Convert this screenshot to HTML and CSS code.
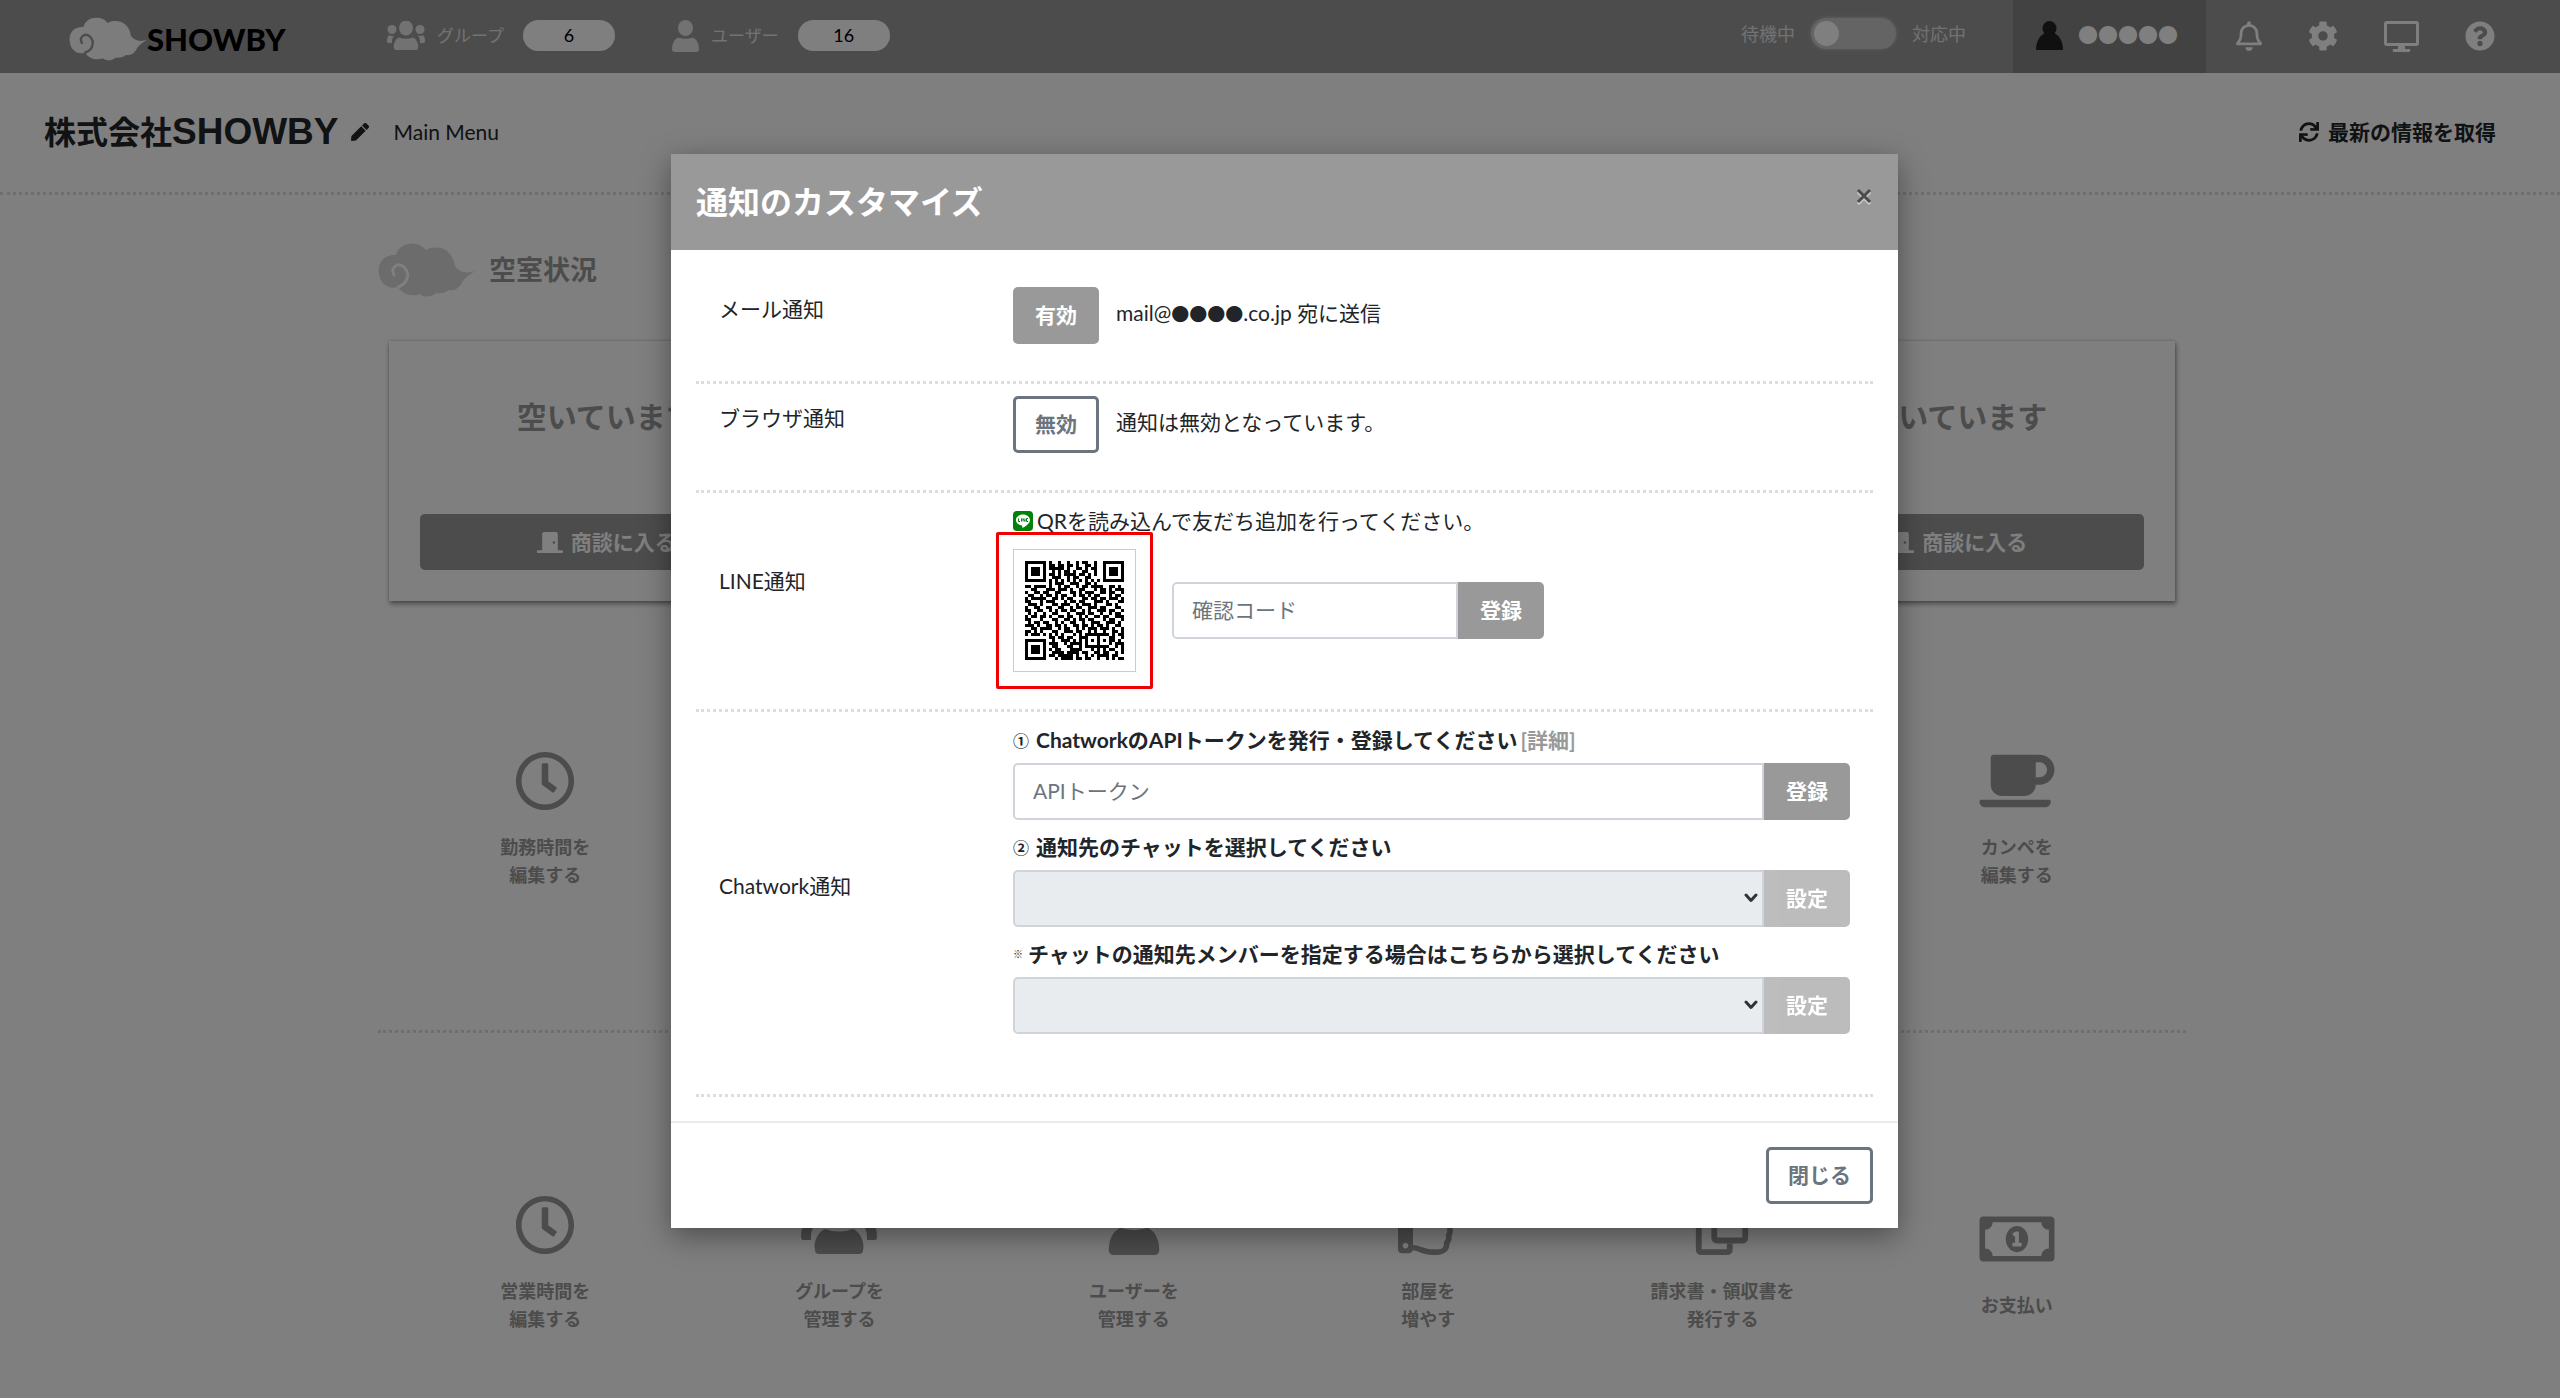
FILE: index.html
```html
<!DOCTYPE html>
<html lang="ja">
<head>
<meta charset="utf-8">
<meta name="viewport" content="width=device-width, initial-scale=1">
<title>SHOWBY</title>
<link rel="stylesheet" href="styles.css">
</head>
<body>
<svg width="0" height="0" class="sprite" aria-hidden="true">
  <symbol id="cloud" viewBox="0 0 97 54">
    <path fill="currentColor" stroke="none" d="M1 31C-1 20 6 11 18 12C20 3 30-1 38 1C43 2 46 5 48 7C55 3 66 4 71 10C75 14 76 18 77 23C81 29 88 31 97 28C92 31 87 35 85 38C82 44 78 48 71 47C67 50 62 51 58 50C55 54 46 55 42 51C35 54 25 52 20 44C10 47 2 40 1 31Z"/>
    <path fill="none" stroke-width="3" stroke-linecap="round" d="M16 32C12 24 20 19 26 24C33 31 29 41 20 44"/>
  </symbol>
  <symbol id="users" viewBox="0 0 38 29">
    <g fill="currentColor"><ellipse cx="19" cy="7" rx="7" ry="7.5"/><ellipse cx="5" cy="8.500" rx="4.500" ry="4.500"/><ellipse cx="33" cy="8.500" rx="4.500" ry="4.500"/><path d="M12 16.500Q19 19 26 16.500C30 18 32 24 31 27Q31 29 29 29H9Q7 29 7 27C6 24 8 18 12 16.500Z"/><path d="M2 14Q5 16 8 14C5 16 5 19 5 22H1Q0 22 0 20Q0 16 2 14ZM36 14Q33 16 30 14C33 16 33 19 33 22H37Q38 22 38 20Q38 16 36 14Z"/></g>
  </symbol>
  <symbol id="user" viewBox="0 0 27 32">
    <g fill="currentColor"><ellipse cx="13.500" cy="8" rx="7.500" ry="8"/><path d="M6 17.500Q13.500 20 21 17.500Q27 21 27 29Q27 32 24 32H3Q0 32 0 29Q0 21 6 17.500Z"/></g>
  </symbol>
  <symbol id="pawn" viewBox="0 0 27 29">
    <g fill="currentColor"><ellipse cx="13.500" cy="7.500" rx="7" ry="7.500"/><path d="M9 12H18C24 15 27 21 27 29H0C0 21 3 15 9 12Z"/></g>
  </symbol>
  <symbol id="bell" viewBox="0 0 448 512"><path fill="currentColor" d="M439.39 362.29c-19.32-20.76-55.47-51.99-55.47-154.29 0-77.7-54.48-139.9-127.94-155.16V32c0-17.67-14.32-32-31.98-32s-31.98 14.33-31.98 32v20.84C118.56 68.1 64.08 130.3 64.08 208c0 102.3-36.15 133.53-55.47 154.29-6 6.45-8.66 14.16-8.61 21.71.11 16.4 12.98 32 32.1 32h383.8c19.12 0 32-15.6 32.1-32 .05-7.55-2.61-15.27-8.61-21.71zM67.53 368c21.22-27.97 44.42-74.33 44.53-159.42 0-.2-.06-.38-.06-.58 0-61.86 50.14-112 112-112s112 50.14 112 112c0 .2-.06.38-.06.58.11 85.1 23.31 131.46 44.53 159.42H67.53zM224 512c35.32 0 63.97-28.65 63.97-64H160.03c0 35.35 28.65 64 63.97 64z"/></symbol>
  <symbol id="cog" viewBox="0 0 512 512"><path fill="currentColor" d="M487.4 315.7l-42.6-24.6c4.3-23.2 4.3-47 0-70.2l42.6-24.6c4.9-2.8 7.1-8.6 5.5-14-11.1-35.6-30-67.8-54.7-94.6-3.8-4.1-10-5.1-14.8-2.3L380.8 110c-17.9-15.4-38.5-27.3-60.8-35.1V25.8c0-5.6-3.9-10.5-9.4-11.7-36.7-8.2-74.3-7.8-109.2 0-5.5 1.2-9.4 6.1-9.4 11.7V75c-22.2 7.9-42.8 19.8-60.8 35.1L88.7 85.5c-4.9-2.8-11-1.9-14.8 2.3-24.7 26.7-43.6 58.9-54.7 94.6-1.7 5.4.6 11.2 5.500 14L67.3 221c-4.300 23.200-4.300 47 0 70.200l-42.600 24.600c-4.900 2.800-7.100 8.600-5.500 14 11.100 35.600 30 67.800 54.700 94.600 3.800 4.100 10 5.100 14.800 2.300l42.600-24.600c17.900 15.400 38.500 27.300 60.800 35.100v49.200c0 5.600 3.900 10.500 9.400 11.700 36.700 8.200 74.300 7.800 109.200 0 5.500-1.200 9.400-6.100 9.400-11.700v-49.200c22.200-7.900 42.800-19.800 60.800-35.100l42.600 24.600c4.900 2.800 11 1.900 14.800-2.300 24.700-26.700 43.600-58.900 54.700-94.600 1.500-5.500-.7-11.300-5.600-14.100zM256 336c-44.100 0-80-35.900-80-80s35.900-80 80-80 80 35.900 80 80-35.900 80-80 80z"/></symbol>
  <symbol id="monitor" viewBox="0 0 35 32"><path fill="none" stroke="currentColor" stroke-width="3" d="M3 2.500H32Q33.500 2.500 33.500 4V23Q33.500 24.500 32 24.500H3Q1.500 24.500 1.500 23V4Q1.500 2.500 3 2.500Z"/><path fill="currentColor" d="M14 25H21V29H26Q27 32 25 32H10Q8 32 9 29H14Z"/></symbol>
  <symbol id="help" viewBox="0 0 512 512"><path fill="currentColor" d="M504 256c0 136.997-111.043 248-248 248S8 392.997 8 256C8 119.083 119.043 8 256 8s248 111.083 248 248zM262.655 90c-54.497 0-89.255 22.957-116.549 63.758-3.536 5.286-2.353 12.415 2.715 16.258l34.699 26.310c5.205 3.947 12.621 3.008 16.665-2.122 17.864-22.658 30.113-35.797 57.303-35.797 20.429 0 45.698 13.148 45.698 32.958 0 14.976-12.363 22.667-32.534 33.976C247.128 238.528 216 254.941 216 296v4c0 6.627 5.373 12 12 12h56c6.627 0 12-5.373 12-12v-1.333c0-28.462 83.186-29.647 83.186-106.667 0-58.002-60.165-102-116.531-102zM256 338c-25.365 0-46 20.635-46 46 0 25.364 20.635 46 46 46s46-20.636 46-46c0-25.365-20.635-46-46-46z"/></symbol>
  <symbol id="pen" viewBox="0 0 512 512"><path fill="currentColor" d="M290.74 93.24l128.02 128.02-277.99 277.99-114.14 12.6C11.35 513.54-1.56 500.62.14 485.34l12.7-114.22 277.9-277.88zm207.2-19.06l-60.11-60.11c-18.75-18.75-49.16-18.75-67.91 0l-56.55 56.55 128.02 128.02 56.55-56.55c18.75-18.76 18.75-49.16 0-67.91z"/></symbol>
  <symbol id="sync" viewBox="0 0 512 512"><path fill="currentColor" d="M440.65 12.57l4 82.77A247.16 247.16 0 0 0 255.83 8C134.73 8 33.91 94.92 12.29 209.82A12 12 0 0 0 24.09 224h49.05a12 12 0 0 0 11.67-9.26 175.91 175.91 0 0 1 317-56.94l-101.46-4.86a12 12 0 0 0-12.57 12v47.41a12 12 0 0 0 12 12H500a12 12 0 0 0 12-12V12a12 12 0 0 0-12-12h-47.37a12 12 0 0 0-11.98 12.57zM255.83 432a175.61 175.61 0 0 1-146-77.8l101.8 4.87a12 12 0 0 0 12.57-12v-47.4a12 12 0 0 0-12-12H12a12 12 0 0 0-12 12V500a12 12 0 0 0 12 12h47.35a12 12 0 0 0 12-12.6l-4.15-82.57A247.17 247.17 0 0 0 255.83 504c121.11 0 221.93-86.92 243.55-201.82a12 12 0 0 0-11.8-14.18h-49.05a12 12 0 0 0-11.67 9.26A175.86 175.86 0 0 1 255.83 432z"/></symbol>
  <symbol id="door" viewBox="0 0 640 512"><path fill="currentColor" d="M624 448H512V50.8C512 22.78 490.47 0 464 0H175.99c-26.47 0-48 22.78-48 50.8V448H16c-8.84 0-16 7.16-16 16v32c0 8.840 7.160 16 16 16h608c8.840 0 16-7.160 16-16v-32c0-8.840-7.160-16-16-16zM415.990 288c-17.670 0-32-14.330-32-32s14.330-32 32-32 32 14.330 32 32c.010 17.670-14.320 32-32 32z"/></symbol>
  <symbol id="clock" viewBox="0 0 512 512"><path fill="currentColor" d="M256 8C119 8 8 119 8 256s111 248 248 248 248-111 248-248S393 8 256 8zm0 448c-110.5 0-200-89.5-200-200S145.5 56 256 56s200 89.5 200 200-89.5 200-200 200zm61.8-104.4l-84.9-61.7c-3.100-2.300-4.900-5.900-4.900-9.700V116c0-6.600 5.400-12 12-12h32c6.600 0 12 5.400 12 12v141.700l66.800 48.600c5.400 3.900 6.500 11.400 2.600 16.800L334.600 349c-3.900 5.300-11.400 6.500-16.800 2.600z"/></symbol>
  <symbol id="coffee" viewBox="0 0 640 512"><path fill="currentColor" d="M192 384h192c53 0 96-43 96-96h32c70.600 0 128-57.400 128-128S582.600 32 512 32H120c-13.300 0-24 10.700-24 24v232c0 53 43 96 96 96zM512 96c35.300 0 64 28.700 64 64s-28.700 64-64 64h-32V96h32zm47.700 384H48.300c-47.600 0-61-64-36-64h583.300c25 0 11.800 64-35.900 64z"/></symbol>
  <symbol id="thumb" viewBox="0 0 512 512"><path fill="currentColor" d="M466.27 286.69C475.04 271.84 480 256 480 236.85c0-44.015-37.218-85.58-85.82-85.58H357.7c4.92-12.81 8.85-28.13 8.85-46.54C366.55 31.936 328.86 0 271.28 0c-61.607 0-58.093 94.933-71.76 108.6-22.747 22.747-49.615 66.447-68.76 83.4H32c-17.673 0-32 14.327-32 32v240c0 17.673 14.327 32 32 32h64c14.893 0 27.408-10.174 30.978-23.95 44.509 1.001 75.06 39.94 177.802 39.94 7.22 0 15.22.01 22.22.01 77.117 0 111.986-39.423 112.94-95.33 13.319-18.425 20.299-43.122 17.34-66.99 9.854-18.452 13.664-40.343 8.99-62.99zm-61.75 53.83c12.56 21.13 1.26 49.41-13.94 57.57 7.7 48.78-17.608 65.9-53.12 65.9h-37.82c-71.639 0-118.029-37.82-171.64-37.82V240h10.92c28.36 0 67.98-70.89 94.54-97.46 28.36-28.36 18.91-75.63 37.82-94.54 47.27 0 47.27 32.98 47.27 56.73 0 39.17-28.36 56.72-28.36 94.54h103.99c21.11 0 37.73 18.91 37.82 37.82.09 18.9-12.82 37.81-22.27 37.81 13.489 14.555 16.371 45.236-5.21 65.62zM88 432c0 13.255-10.745 24-24 24s-24-10.745-24-24 10.745-24 24-24 24 10.745 24 24z"/></symbol>
  <symbol id="copy" viewBox="0 0 54 62"><g fill="none" stroke="currentColor" stroke-width="6"><path d="M19 3H40L51 14V44Q51 47 48 47H22Q19 47 19 44Z"/><path d="M16 15H6Q3 15 3 18V56Q3 59 6 59H32Q35 59 35 56V50"/></g></symbol>
  <symbol id="money" viewBox="0 0 640 512"><path fill="currentColor" d="M320 144c-53.02 0-96 50.14-96 112 0 61.85 42.98 112 96 112 53 0 96-50.13 96-112 0-61.86-42.98-112-96-112zm40 168c0 4.42-3.58 8-8 8h-64c-4.42 0-8-3.58-8-8v-16c0-4.42 3.58-8 8-8h16v-55.44l-.47.31a7.992 7.992 0 0 1-11.09-2.22l-8.88-13.31a7.992 7.992 0 0 1 2.22-11.09l15.33-10.22a23.99 23.99 0 0 1 13.31-4.03H328c4.42 0 8 3.58 8 8V288h16c4.42 0 8 3.58 8 8v16zM608 64H32C14.33 64 0 78.33 0 96v320c0 17.67 14.33 32 32 32h576c17.67 0 32-14.33 32-32V96c0-17.67-14.33-32-32-32zm-16 272c-35.35 0-64 28.65-64 64H112c0-35.35-28.65-64-64-64V176c35.35 0 64-28.65 64-64h416c0 35.35 28.65 64 64 64v160z"/></symbol>
  <symbol id="chevron" viewBox="0 0 14 10"><path fill="none" stroke="currentColor" stroke-width="3" stroke-linecap="round" stroke-linejoin="round" d="M2 2L7 7.500L12 2"/></symbol>
</svg>

<header class="topbar">
  <a class="brand" href="#"><svg class="brand-cloud"><use href="#cloud"/></svg><span>SHOWBY</span></a>
  <div class="stat">
    <svg class="i-users"><use href="#users"/></svg><span class="stat-name">グループ</span><span class="pill">6</span>
  </div>
  <div class="stat">
    <svg class="i-user"><use href="#user"/></svg><span class="stat-name">ユーザー</span><span class="pill">16</span>
  </div>
  <div class="status">
    <label for="status">待機中</label>
    <input class="switch" type="checkbox" id="status">
    <label for="status">対応中</label>
  </div>
  <button class="account" type="button"><svg class="i-pawn"><use href="#pawn"/></svg><span class="mask">●●●●●</span></button>
  <nav class="tools">
    <button type="button" aria-label="お知らせ"><svg class="i-bell"><use href="#bell"/></svg></button>
    <button type="button" aria-label="設定"><svg class="i-tool"><use href="#cog"/></svg></button>
    <button type="button" aria-label="画面"><svg class="i-monitor"><use href="#monitor"/></svg></button>
    <button type="button" aria-label="ヘルプ"><svg class="i-tool"><use href="#help"/></svg></button>
  </nav>
</header>

<div class="pagehead">
  <h1>株式会社<span>SHOWBY</span></h1>
  <svg class="i-pen"><use href="#pen"/></svg>
  <span class="crumb">Main Menu</span>
  <button class="refresh" type="button"><svg class="i-sync"><use href="#sync"/></svg>最新の情報を取得</button>
</div>

<main class="main">
  <h2 class="section-title"><svg class="title-cloud"><use href="#cloud"/></svg>空室状況</h2>
  <div class="rooms">
    <article class="room">
      <h3>空いています</h3>
      <button type="button"><svg class="i-door"><use href="#door"/></svg>商談に入る</button>
    </article>
    <article class="room room-last">
      <h3>空いています</h3>
      <button type="button"><svg class="i-door"><use href="#door"/></svg>商談に入る</button>
    </article>
  </div>

  <div class="tiles">
    <a class="tile" href="#"><svg class="t-icon"><use href="#clock"/></svg>勤務時間を<br>編集する</a>
    <a class="tile tile-last" href="#"><svg class="t-icon t-wide"><use href="#coffee"/></svg>カンペを<br>編集する</a>
  </div>
  <hr class="rule">
  <div class="tiles">
    <a class="tile" href="#"><svg class="t-icon"><use href="#clock"/></svg>営業時間を<br>編集する</a>
    <a class="tile" href="#"><svg class="t-icon t-wide"><use href="#users"/></svg>グループを<br>管理する</a>
    <a class="tile" href="#"><svg class="t-icon"><use href="#user"/></svg>ユーザーを<br>管理する</a>
    <a class="tile" href="#"><svg class="t-icon"><use href="#thumb"/></svg>部屋を<br>増やす</a>
    <a class="tile" href="#"><svg class="t-icon"><use href="#copy"/></svg>請求書・領収書を<br>発行する</a>
    <a class="tile" href="#"><svg class="t-icon t-wide"><use href="#money"/></svg>お支払い</a>
  </div>
</main>

<div class="backdrop">
  <section class="modal" role="dialog" aria-modal="true" aria-labelledby="modal-title">
    <header class="modal-head">
      <h2 id="modal-title">通知のカスタマイズ</h2>
      <button class="close" type="button" aria-label="閉じる"><svg viewBox="0 0 16 16"><path d="M2 2L14 14M14 2L2 14"/></svg></button>
    </header>
    <div class="modal-body">
      <div class="row">
        <div class="name">メール通知</div>
        <div class="field inline"><button class="btn" type="button">有効</button><p>mail@<span class="mask mask-small">●●●●</span>.co.jp 宛に送信</p></div>
      </div>
      <div class="row">
        <div class="name">ブラウザ通知</div>
        <div class="field inline"><button class="btn btn-outline" type="button">無効</button><p>通知は無効となっています。</p></div>
      </div>
      <div class="row row-line">
        <label class="name" for="line-code">LINE通知</label>
        <div class="field">
          <p class="lead"><svg class="i-line" viewBox="0 0 20 20"><rect width="20" height="20" rx="4" fill="#00820a"/><path fill="#fff" d="M10 3.500C5.800 3.500 3 6 3 9C3 12 5.500 14 9 14.500L9.500 17C13 15 17 12.500 17 9C17 6 14.200 3.500 10 3.500Z"/><path stroke="#00820a" d="M5.500 7.500V10.500H7M8.500 7.500V10.500M10 10.500V7.500L12 10.500V7.500M15 7.500H13.500V10.500H15"/></svg>QRを読み込んで友だち追加を行ってください。</p>
          <div class="line-form">
            <div class="qr"><svg id="qr" viewBox="0 0 33 33" shape-rendering="crispEdges" role="img" aria-label="QR"></svg></div>
            <div class="group"><input type="text" id="line-code" placeholder="確認コード"><button class="btn" type="button">登録</button></div>
          </div>
        </div>
      </div>
      <div class="row row-chat">
        <div class="name">Chatwork通知</div>
        <div class="field">
          <div class="caption"><span class="num">①</span><label for="token">ChatworkのAPIトークンを発行・登録してください</label><a href="#">[詳細]</a></div>
          <div class="group"><input type="text" id="token" placeholder="APIトークン"><button class="btn" type="button">登録</button></div>
          <div class="caption"><span class="num">②</span><label for="chat">通知先のチャットを選択してください</label></div>
          <div class="group"><div class="select"><select id="chat" disabled></select><svg><use href="#chevron"/></svg></div><button class="btn" type="button" disabled>設定</button></div>
          <div class="caption"><span class="num note">※</span><label for="member">チャットの通知先メンバーを指定する場合はこちらから選択してください</label></div>
          <div class="group"><div class="select"><select id="member" disabled></select><svg><use href="#chevron"/></svg></div><button class="btn" type="button" disabled>設定</button></div>
        </div>
      </div>
    </div>
    <footer class="modal-foot"><button class="btn btn-outline" type="button">閉じる</button></footer>
  </section>
</div>
<script src="qr.js"></script>
</body>
</html>
```
FILE: styles.css
```css
* { box-sizing: border-box; }

body {
  margin: 0;
  min-height: 100vh;
  background: #fff;
  color: #212529;
  font: 21px/32px Lato, "Noto Sans CJK JP", sans-serif;
}

h1, h2, h3, p { margin: 0; }
button, input, select { font: inherit; color: inherit; }
button { padding: 0; border: 0; background: none; cursor: pointer; }
a { color: inherit; text-decoration: none; }
svg { display: block; flex: none; }
.sprite { position: absolute; }
.mask { font-family: "Noto Sans CJK JP", sans-serif; font-size: 20px; line-height: 30px; }
.mask-small { font-size: 18px; }

/* top bar */
.topbar {
  display: flex;
  align-items: center;
  height: 73px;
  background: #999;
  color: #fff;
  font-size: 18px;
}
.brand {
  display: flex;
  align-items: center;
  width: 387px;
  padding: 4px 0 0 69px;
  color: #000;
  font-size: 31px;
  font-weight: 900;
}
.brand-cloud { width: 78px; height: 44px; color: #f8f8f8; stroke: #999; }
.stat { display: flex; align-items: center; gap: 12px; margin-right: 57px; padding-bottom: 2px; font-size: 17px; color: #e4e4e4; }
.pill {
  width: 92px;
  height: 31px;
  margin-left: 7px;
  border-radius: 16px;
  background: #fff;
  color: #000;
  font-size: 18px;
  line-height: 31px;
  text-align: center;
}
.i-users { width: 38px; height: 29px; }
.i-user { width: 27px; height: 32px; }
.status { display: flex; align-items: center; gap: 16px; margin-left: auto; padding-bottom: 6px; color: #e4e4e4; }
.switch {
  appearance: none;
  display: flex;
  align-items: center;
  width: 85px;
  height: 31px;
  margin: 0;
  padding: 3px;
  border-radius: 16px;
  background: #c8c8c8;
  box-shadow: 0 0 3px 1px #ddd6;
}
.switch::before { content: ""; width: 25px; height: 25px; border-radius: 50%; background: #fff; }
.account {
  display: flex;
  align-items: center;
  gap: 15px;
  align-self: stretch;
  margin-left: 47px;
  padding: 0 28px 3px 23px;
  background: #848484;
  color: #fff;
}
.i-pawn { width: 27px; height: 29px; color: #212121; }
.tools { display: flex; align-items: center; gap: 46px; padding: 0 65px 2px 30px; }
.tools button { color: inherit; }
.i-bell { width: 26px; height: 30px; }
.i-tool { width: 30px; height: 30px; }
.i-monitor { width: 35px; height: 32px; }

/* page heading */
.pagehead {
  display: flex;
  align-items: center;
  height: 122px;
  padding: 0 64px 2px 44px;
  border-bottom: 3px dotted #ddd;
}
.pagehead h1 { font-size: 32px; line-height: 40px; font-weight: 700; }
.pagehead h1 span { font-family: "Liberation Sans", sans-serif; font-size: 37px; }
.i-pen { width: 18px; height: 18px; margin: 0 25px 0 12px; }
.refresh { display: flex; align-items: center; gap: 8px; margin-left: auto; font-weight: 700; }
.i-sync { width: 22px; height: 20px; }

/* dashboard */
.main { max-width: 1812px; margin: 0 auto; padding: 48px 0 40px 4px; color: #999; }
.section-title { display: flex; align-items: center; gap: 14px; font-size: 27px; line-height: 54px; }
.title-cloud { width: 97px; height: 54px; color: #d8d8d8; stroke: #fff; }
.rooms {
  display: grid;
  grid-template-columns: repeat(4, 1fr);
  gap: 16px;
  margin: 44px 0 150px;
  padding: 0 11px;
}
.room { padding: 52px 31px 31px; text-align: center; box-shadow: 1px 3px 5px #0006, 0 0 3px #0003; }
.room-last { grid-column: 4; }
.room h3 { margin-bottom: 75px; font-size: 30px; line-height: 46px; }
.room button {
  display: flex;
  align-items: center;
  justify-content: center;
  gap: 8px;
  width: 100%;
  height: 56px;
  border-radius: 5px;
  background: #999;
  color: #fff;
  font-weight: 700;
}
.i-door { width: 26px; height: 21px; }
.tiles { display: grid; grid-template-columns: repeat(6, 1fr); align-items: center; padding: 0 22px 0 20px; }
.tile { font-size: 18px; line-height: 28px; font-weight: 700; text-align: center; }
.tile-last { grid-column: 6; }
.t-icon { width: 60px; height: 60px; margin: 0 auto 22px; }
.t-wide { width: 76px; }
.rule { margin: 141px 0 162px; border: 0; border-top: 3px dotted #ddd; }

/* modal */
.backdrop {
  position: absolute;
  inset: 0;
  padding: 154px 0 60px 9px;
  background: #00000080;
}
.modal {
  max-width: 1227px;
  margin: 0 auto;
  background: #fff;
  box-shadow: 0 8px 28px #0006;
}
.modal-head {
  display: flex;
  justify-content: space-between;
  align-items: center;
  height: 96px;
  padding: 0 25px;
  background: #999;
  color: #fff;
}
.modal-head h2 { font-size: 32px; line-height: 48px; }
.close { padding: 0 1px 12px; }
.close svg { width: 16px; height: 16px; fill: none; stroke: #4c4c4c; stroke-width: 3; filter: drop-shadow(0 2px 0 #fff8); }
.modal-body { padding: 25px 25px 24px; }
.row { display: flex; padding: 12px 23px 37px; border-bottom: 3px dotted #ddd; }
.name { width: 294px; padding-top: 6px; }
.row-line .name { padding-top: 60px; }
.row-chat .name { padding-top: 146px; }
.row-chat { padding-bottom: 60px; }
.field { flex: 1; }
.inline { display: flex; align-items: center; gap: 17px; }
.inline p { padding-bottom: 6px; }
.btn {
  height: 57px;
  padding: 0 22px 2px;
  border-radius: 5px;
  background: #999;
  color: #fff;
  font-weight: 700;
}
.btn:disabled { opacity: .65; }
.btn-outline { padding: 0 19px 2px; border: 3px solid #6c757d; background: #fff; color: #6c757d; }
.lead { display: flex; align-items: center; gap: 4px; }
.i-line { width: 20px; height: 20px; fill: none; }
.line-form { display: flex; align-items: center; gap: 36px; margin-top: 12px; }
.qr { position: relative; width: 123px; height: 123px; padding: 11px; border: 1px solid #ccc; }
.qr svg { width: 99px; height: 99px; }
.qr::after { content: ""; position: absolute; inset: -18px; border: 3px solid #f00000; border-radius: 2px; }
.group { display: flex; }
.group input, .group select {
  width: 100%;
  min-width: 0;
  height: 57px;
  padding: 0 18px 2px;
  border: 2px solid #ced4da;
  border-radius: 5px 0 0 5px;
  background: #fff;
}
.line-form input { width: 286px; }
.group input::placeholder { color: #6c757d; opacity: 1; }
.group .btn { flex: none; border-radius: 0 5px 5px 0; }
.select { position: relative; flex: 1; }
.group select { display: block; appearance: none; background: #e9ecef; opacity: 1; }
.select svg { position: absolute; right: 6px; top: 23px; width: 14px; height: 10px; color: #333; }
.caption { display: flex; margin-bottom: 7px; line-height: 32px; font-weight: 700; }
.group + .caption { margin-top: 11px; }
.caption a { margin-left: 3px; color: #999; }
.num { width: 23px; font-size: 16px; font-family: "Noto Sans CJK JP", sans-serif; }
.note { width: 15px; font-size: 10px; font-weight: 400; }
.modal-foot { padding: 24px 25px; border-top: 2px solid #e9ecef; text-align: right; }
.modal-foot .btn { display: inline-block; vertical-align: top; }
```
FILE: qr.js
```js
const modules = [
  "#######.#..#..#..#.##..#.#######.",
  "#.....#.##.##.##.#..##.#.#.....#.",
  "#.###.#.#####.#..##.#.##.#.###.#.",
  "#.###.#..#.#.##.#..##..#.#.###.#.",
  "#.###.#.##.#.####.##.#.#.#.###.#.",
  "#.....#..###..#.##..##...#.....#.",
  "#######.#.#.#.#.#.#.#.#.#.#######",
  "........#.###..###..##.#.........",
  "##.####.#..#.##..#.##.####..##.#.",
  "..##...###.###.#..##...#.##.#.###",
  "#..##.##..##...##.#.###..##.##..#",
  ".##..#.##.#.##..#.##.#.##...#.##.",
  "#.#####..##.#.##...##.##.##.###.#",
  "##...#.###...#.##.##...###.#...##",
  ".###.#...##.###..#.###.#...##.#..",
  "#..##..##..##..#.##..###.##...##.",
  "##..##..#.#.##.##..#.#..###.##..#",
  ".#.#..#..##...#..###.##..#..#.##.",
  "#.##.##.#..##.##..#.#..##.##..###",
  "##...#...##..##.#.##.##...#.##..#",
  ".#.##.##..#.#..##..#..###..###.#.",
  "###.#..##.##.#..##.##.#.##.#..##.",
  "..##.####..#.##..#.#.###.###.#..#",
  "##.#.#...##..###.##..#.#..#..##.#",
  "#.###.#.#.#.#...#.#.########.#.##",
  "........##.##.##..###...#...##..#",
  "#######..#..###.#.#.#.#.#.#.##.#.",
  "#.....#.###..#.####.#...#...#.###",
  "#.###.#..##...##..#.########..#.#",
  "#.###.#.#.##...####...#.#.#.##..#",
  "#.###.#..####.####.##..##.##..#.#",
  "#.....#.##.#####.#..#.#.####.##..",
  "#######...#.####.##.##..#..#.#.##"
];

// The top-right finder ends on the last column.
for (let y = 0; y < 6; y++) {
  modules[y] = modules[y].slice(0, 25) + "." + modules[y].slice(25, 32);
}

let d = "";
modules.forEach((row, y) => {
  [...row].forEach((cell, x) => {
    if (cell === "#") d += `M${x} ${y}h1v1h-1z`;
  });
});
const path = document.createElementNS("http://www.w3.org/2000/svg", "path");
path.setAttribute("d", d);
document.getElementById("qr").append(path);
```
